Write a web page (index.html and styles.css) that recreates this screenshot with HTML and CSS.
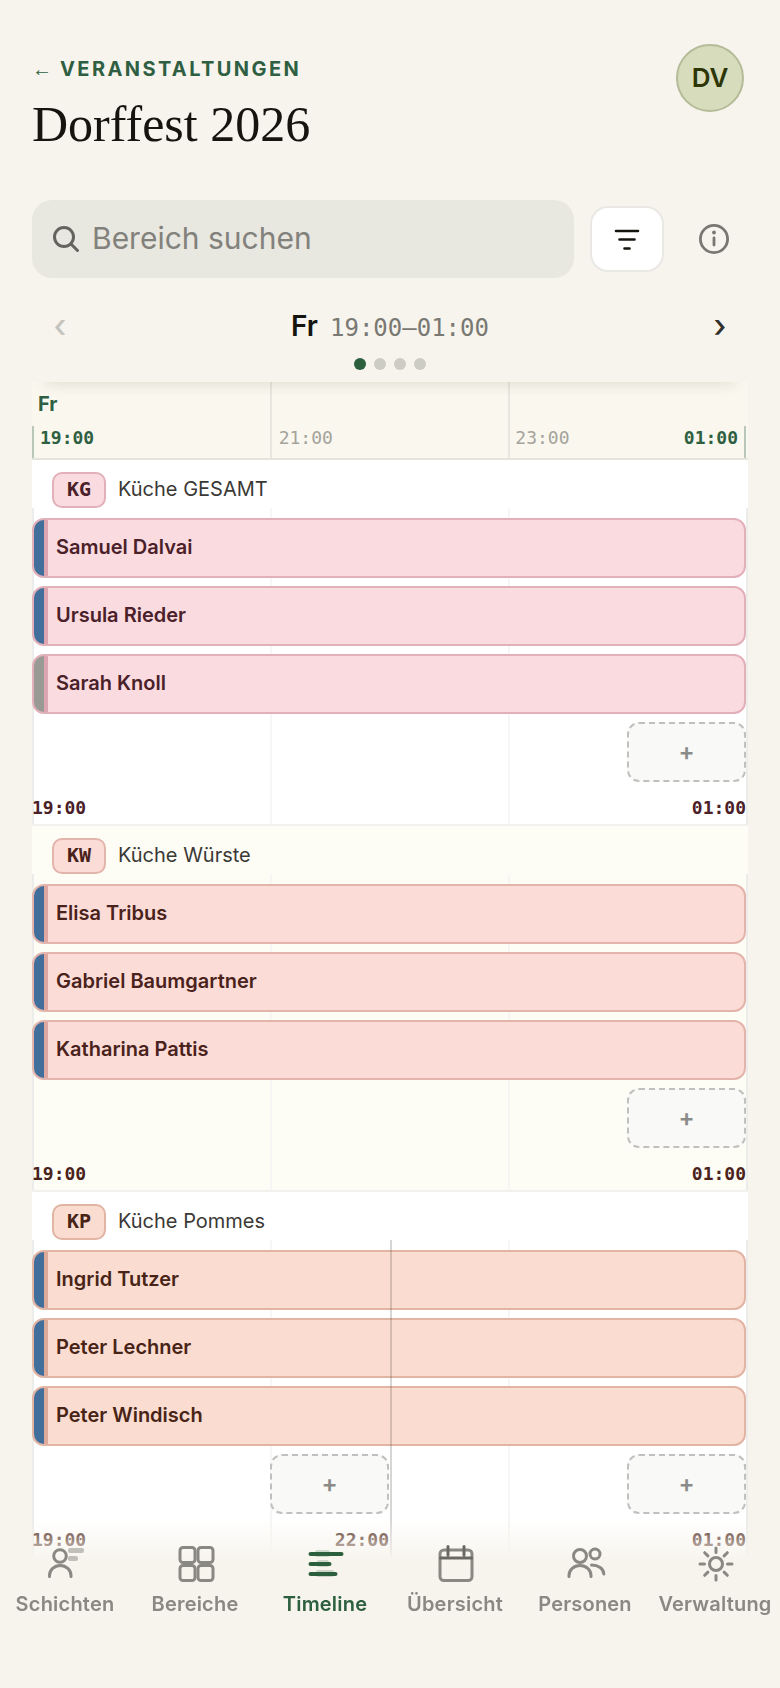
FILE: index.html
```html
<!DOCTYPE html>
<html lang="de">
<head>
    <meta charset="UTF-8">
    <meta name="viewport" content="width=device-width, initial-scale=1.0">
    <title>Dorffest 2026 - Timeline</title>
    <link rel="stylesheet" href="styles.css">
</head>
<body>
    <main class="page">
        <header class="header">
            <div class="heading">
                <a class="back-link" href="#veranstaltungen"><span class="back-arrow">←</span>Veranstaltungen</a>
                <h1>Dorffest 2026</h1>
            </div>
            <button class="avatar" type="button" aria-label="Profil">DV</button>
        </header>

        <section class="toolbar">
            <div class="search-row">
                <label class="search">
                    <svg width="28" height="28" viewBox="0 0 28 28" fill="none" stroke="currentColor" stroke-width="3" stroke-linecap="round" aria-hidden="true">
                        <circle cx="12" cy="12" r="9.500"/>
                        <path d="M19 19l6.500 6.500"/>
                    </svg>
                    <input type="search" placeholder="Bereich suchen" aria-label="Bereich suchen">
                </label>
                <button class="filter-btn" type="button" aria-label="Filter">
                    <svg width="28" height="28" viewBox="0 0 28 28" fill="none" stroke="currentColor" stroke-width="2.600" stroke-linecap="round">
                        <path d="M3 6h22M6.500 14.500h15M11.500 23.500h5"/>
                    </svg>
                </button>
                <button class="info-btn" type="button" aria-label="Info">
                    <svg width="32" height="32" viewBox="0 0 32 32" fill="none" stroke="currentColor" stroke-width="2.800" stroke-linecap="round">
                        <circle cx="16" cy="16" r="13.600"/>
                        <path d="M16 15v7"/>
                        <circle cx="16" cy="9.500" r="1.900" fill="currentColor" stroke="none"/>
                    </svg>
                </button>
            </div>
            <div class="day-nav">
                <button class="day-btn" type="button" aria-label="Vorheriger Tag" disabled>‹</button>
                <p class="day"><b>Fr</b> <span class="day-time">19:00–01:00</span></p>
                <button class="day-btn" type="button" aria-label="Nächster Tag">›</button>
            </div>
            <div class="dots">
                <span class="dot active"></span>
                <span class="dot"></span>
                <span class="dot"></span>
                <span class="dot"></span>
            </div>
        </section>

        <section class="timeline">
            <div class="scale">
                <span class="scale-day">Fr</span>
                <div class="scale-hours">
                    <span class="hour start">19:00</span>
                    <span class="hour">21:00</span>
                    <span class="hour last">23:00 <b>01:00</b></span>
                </div>
            </div>

            <article class="area kg">
                <h2 class="area-head"><span class="badge">KG</span>Küche GESAMT</h2>
                <div class="lanes">
                    <button class="shift" type="button">Samuel Dalvai</button>
                    <button class="shift" type="button">Ursula Rieder</button>
                    <button class="shift open" type="button">Sarah Knoll</button>
                    <button class="slot slot-last" type="button" aria-label="Schicht hinzufügen">+</button>
                    <span class="time time-first">19:00</span>
                    <span class="time time-last">01:00</span>
                </div>
            </article>

            <article class="area kw">
                <h2 class="area-head"><span class="badge">KW</span>Küche Würste</h2>
                <div class="lanes">
                    <button class="shift" type="button">Elisa Tribus</button>
                    <button class="shift" type="button">Gabriel Baumgartner</button>
                    <button class="shift" type="button">Katharina Pattis</button>
                    <button class="slot slot-last" type="button" aria-label="Schicht hinzufügen">+</button>
                    <span class="time time-first">19:00</span>
                    <span class="time time-last">01:00</span>
                </div>
            </article>

            <article class="area kp">
                <h2 class="area-head"><span class="badge">KP</span>Küche Pommes</h2>
                <div class="lanes">
                    <button class="shift" type="button">Ingrid Tutzer</button>
                    <button class="shift" type="button">Peter Lechner</button>
                    <button class="shift" type="button">Peter Windisch</button>
                    <button class="slot slot-mid" type="button" aria-label="Schicht hinzufügen">+</button>
                    <button class="slot slot-last" type="button" aria-label="Schicht hinzufügen">+</button>
                    <span class="time time-first">19:00</span>
                    <span class="time time-mid">22:00</span>
                    <span class="time time-last">01:00</span>
                    <span class="split-line"></span>
                </div>
            </article>
        </section>
    </main>

    <nav class="tabs">
        <a class="tab" href="#schichten">
            <svg width="36" height="36" viewBox="0 0 36 36">
                <circle cx="13" cy="10" r="6.300"/>
                <path d="M2.500 30.500v-1a10.700 10 0 0 1 21.500 0v1"/>
                <g class="soft"><rect x="21" y="2" width="16" height="5" rx="2"/><rect x="21" y="10" width="10" height="5" rx="2"/></g>
            </svg>
            Schichten
        </a>
        <a class="tab" href="#bereiche">
            <svg width="36" height="36" viewBox="0 0 36 36">
                <rect x="3" y="1.500" width="15" height="15" rx="3"/>
                <rect x="21" y="1.500" width="15" height="15" rx="3"/>
                <rect x="3" y="19.500" width="15" height="15" rx="3"/>
                <rect x="21" y="19.500" width="15" height="15" rx="3"/>
            </svg>
            Bereiche
        </a>
        <a class="tab active" href="#timeline" aria-current="page">
            <svg width="36" height="36" viewBox="0 0 36 36">
                <g class="soft"><rect x="8" y="4" width="15" height="7" rx="2"/><rect x="10" y="14" width="12" height="7" rx="2"/><rect x="9" y="24" width="18" height="7" rx="2"/></g>
                <path class="thick" d="M3.500 8h31M3.500 18h19M3.500 28h25"/>
            </svg>
            Timeline
        </a>
        <a class="tab" href="#uebersicht">
            <svg width="36" height="36" viewBox="0 0 36 36">
                <rect x="3" y="4" width="32" height="30.500" rx="4"/>
                <path class="dark" d="M3.500 12h31M11 .500v8.500M27 .500v8.500"/>
            </svg>
            Übersicht
        </a>
        <a class="tab" href="#personen">
            <svg width="36" height="36" viewBox="0 0 36 36">
                <circle cx="13" cy="10" r="6.500"/>
                <circle cx="28" cy="8" r="5"/>
                <path d="M2 30.500v-1a11 10 0 0 1 22 0v1M24.500 19c7 0 12 3.500 12.300 9"/>
            </svg>
            Personen
        </a>
        <a class="tab" href="#verwaltung">
            <svg width="36" height="36" viewBox="0 0 36 36">
                <circle cx="19" cy="18" r="6.500"/>
                <path d="M19 2v4.500M19 29.500V34M3 18h4.500M30.500 18H35M7.700 6.700l3.200 3.200M27.100 26.100l3.200 3.200M7.700 29.300l3.200-3.200M27.100 9.900l3.200-3.200"/>
            </svg>
            Verwaltung
        </a>
    </nav>
</body>
</html>
```

FILE: styles.css
```css
* {
    box-sizing: border-box;
}
body {
    margin: 0;
    background-color: #f7f4ed;
    color: #15140f;
    font-family: Inter, sans-serif;
    font-size: 20px;
}
button {
    font: inherit;
    color: inherit;
    padding: 0;
    cursor: pointer;
}
.page {
    padding: 44px 32px 132px;
}

/* Header */
.header {
    display: flex;
    justify-content: space-between;
    align-items: flex-start;
    padding-right: 4px;
    margin-bottom: 46px;
}
.heading {
    padding-top: 13px;
}
.back-link {
    display: flex;
    align-items: center;
    gap: 8px;
    color: #2f5f42;
    font-weight: 700;
    line-height: 24px;
    letter-spacing: 0.12em;
    text-transform: uppercase;
    text-decoration: none;
}
.back-arrow {
    font-family: "Liberation Serif", serif;
    font-weight: 400;
    letter-spacing: 0;
}
h1 {
    margin: 13px 0 0;
    font-family: "Liberation Serif", serif;
    font-size: 50px;
    font-weight: 400;
    line-height: 60px;
}
.avatar {
    width: 68px;
    height: 68px;
    padding-bottom: 2px;
    border: 2px solid #b5bb98;
    border-radius: 50%;
    background-color: #d6dcbc;
    color: #2d3607;
    font-size: 26px;
    font-weight: 600;
}

/* Search and day selection */
.toolbar {
    position: relative;
    z-index: 1;
    padding-bottom: 12px;
    background-color: #f7f4ed;
    box-shadow: 0 14px 14px -14px rgba(60, 50, 20, 0.16);
}
.search-row {
    display: flex;
    align-items: center;
    gap: 16px;
    margin-bottom: 20px;
}
.search {
    flex: 1;
    display: flex;
    align-items: center;
    gap: 12px;
    min-width: 0;
    height: 78px;
    padding: 0 20px;
    border-radius: 20px;
    background-color: #e8e7e0;
    color: #65635e;
}
.search svg {
    flex: none;
}
.search input {
    flex: 1;
    min-width: 0;
    padding: 0 0 2px;
    border: none;
    outline: none;
    background: none;
    font: inherit;
    font-size: 30px;
    line-height: 40px;
}
.search input::placeholder {
    color: #82817b;
    opacity: 1;
}
.filter-btn {
    display: flex;
    flex: none;
    align-items: center;
    justify-content: center;
    width: 74px;
    height: 66px;
    border: 2px solid #e9e8e4;
    border-radius: 18px;
    background-color: #fff;
}
.info-btn {
    display: flex;
    flex: none;
    align-items: center;
    justify-content: center;
    width: 68px;
    height: 66px;
    border: none;
    background: none;
    color: #797772;
}
.day-nav {
    display: flex;
    align-items: center;
    justify-content: space-between;
    height: 58px;
}
.day-btn {
    width: 56px;
    height: 56px;
    padding-bottom: 4px;
    border: none;
    background: none;
    color: #33312c;
    font-size: 32px;
    font-weight: 500;
}
.day-btn:disabled {
    color: #c5c3bd;
}
.day {
    display: flex;
    align-items: baseline;
    gap: 12px;
    margin: 0;
    font-size: 28px;
    line-height: 36px;
}
.day b {
    font-weight: 600;
}
.day-time {
    color: #797872;
    font-family: "DejaVu Sans Mono", monospace;
    font-size: 24px;
}
.dots {
    display: flex;
    justify-content: center;
    gap: 8px;
    margin-top: 2px;
}
.dot {
    width: 12px;
    height: 12px;
    border-radius: 50%;
    background-color: #cccbc4;
}
.dot.active {
    background-color: #2c5f3e;
}

/* Time scale */
.scale {
    padding-right: 2px;
    border-bottom: 2px solid #e4e4dc;
    background-color: #f9f7ee;
    background-image: linear-gradient(#e8e6de, #e8e6de), linear-gradient(#e8e6de, #e8e6de);
    background-size: 2px 100%;
    background-position: calc(100% / 3) 0, calc(200% / 3) 0;
    background-repeat: no-repeat;
}
.scale-day {
    display: block;
    padding: 6px;
    color: #2f5f42;
    font-weight: 700;
    line-height: 32px;
}
.scale-hours {
    display: grid;
    grid-template-columns: repeat(3, 1fr);
    padding-bottom: 8px;
    border: 2px solid #b9c7b8;
    border-width: 0 2px;
    color: #a4a39c;
    font-family: "DejaVu Sans Mono", monospace;
    font-size: 18px;
    line-height: 24px;
}
.hour {
    padding-left: 8px;
}
.hour.start, .hour b {
    color: #2f5f42;
    font-weight: 700;
}
.hour.start {
    padding-left: 6px;
}
.hour.last {
    display: flex;
    justify-content: space-between;
    padding-right: 6px;
}

/* Areas */
.area {
    border-bottom: 2px solid #f1f1ee;
    background-color: #fff;
}
.area:last-child {
    border-bottom: none;
}
.area-head {
    display: flex;
    align-items: flex-start;
    gap: 12px;
    margin: 0;
    padding: 12px 20px 0;
    color: #3a3935;
    font-size: 20px;
    font-weight: 400;
    line-height: 34px;
}
.badge {
    width: 54px;
    height: 36px;
    border: 2px solid var(--edge);
    border-radius: 10px;
    background-color: var(--fill);
    color: var(--ink);
    font-family: "DejaVu Sans Mono", monospace;
    font-weight: 700;
    line-height: 30px;
    text-align: center;
}
.lanes {
    position: relative;
    display: grid;
    grid-template-columns: repeat(6, 1fr);
    row-gap: 8px;
    padding: 10px 2px 0 0;
    background-image: linear-gradient(#ececea, #ececea), linear-gradient(#f6f6f4, #f6f6f4), linear-gradient(#f6f6f4, #f6f6f4), linear-gradient(#ececea, #ececea);
    background-size: 2px 100%;
    background-position: 0 0, calc(100% / 3) 0, calc(200% / 3) 0, 100% 0;
    background-repeat: no-repeat;
}
.shift {
    grid-column: 1 / -1;
    height: 60px;
    padding: 0 0 2px 22px;
    border: 2px solid var(--edge);
    border-radius: 12px;
    background: linear-gradient(to right, #426e9b 10px, var(--stripe) 10px 14px, var(--fill) 14px);
    color: var(--ink);
    font-weight: 600;
    text-align: left;
}
.shift.open {
    background: linear-gradient(to right, #9a9a94 10px, var(--stripe) 10px 14px, var(--fill) 14px);
}
.slot {
    height: 60px;
    padding-bottom: 2px;
    border: 2px dashed #c0c0be;
    border-radius: 12px;
    background-color: #f9f9f8;
    color: #8b8b89;
    font-size: 24px;
    font-weight: 600;
}
.slot-mid {
    grid-column: 3;
}
.slot-last {
    grid-column: 6;
}
.time {
    grid-row: 5;
    margin: 4px 0 2px;
    color: var(--ink);
    font-family: "DejaVu Sans Mono", monospace;
    font-size: 18px;
    font-weight: 700;
    line-height: 28px;
    text-align: right;
}
.time-first {
    grid-column: 1;
    text-align: left;
}
.time-mid {
    grid-column: 3;
}
.time-last {
    grid-column: 6;
}
.split-line {
    position: absolute;
    top: 0;
    bottom: 0;
    left: 50%;
    width: 2px;
    background-color: rgba(60, 50, 45, 0.2);
}
.kg {
    --fill: #fadbdf;
    --edge: #e2b0b9;
    --stripe: #dca5b0;
    --ink: #4a2029;
}
.kw {
    --fill: #fcdcd6;
    --edge: #e3b4ab;
    --stripe: #dfa9a1;
    --ink: #4a221c;
    background-color: #fdfdf5;
}
.kp {
    --fill: #fadcd0;
    --edge: #e1b4a3;
    --stripe: #dcaa98;
    --ink: #482417;
}

/* Bottom navigation */
.tabs {
    position: fixed;
    z-index: 2;
    right: 0;
    bottom: 0;
    left: 0;
    display: grid;
    grid-template-columns: repeat(6, 1fr);
    padding: 28px 0 70px;
    background: linear-gradient(rgba(247, 244, 237, 0), #f7f4ed 46px);
}
.tab {
    display: flex;
    flex-direction: column;
    align-items: center;
    gap: 8px;
    color: #8a8882;
    font-weight: 600;
    line-height: 28px;
    letter-spacing: 0.01em;
    text-decoration: none;
}
.tab.active {
    color: #2c5f3e;
}
.tab svg {
    overflow: visible;
    fill: none;
    stroke: currentColor;
    stroke-width: 3;
    stroke-linecap: round;
}
.tab .thick {
    stroke-width: 4;
}
.tab .dark {
    stroke: #6a6863;
}
.tab .soft {
    fill: currentColor;
    stroke: none;
    opacity: 0.5;
}
.tab.active .soft {
    opacity: 0.2;
}
```
